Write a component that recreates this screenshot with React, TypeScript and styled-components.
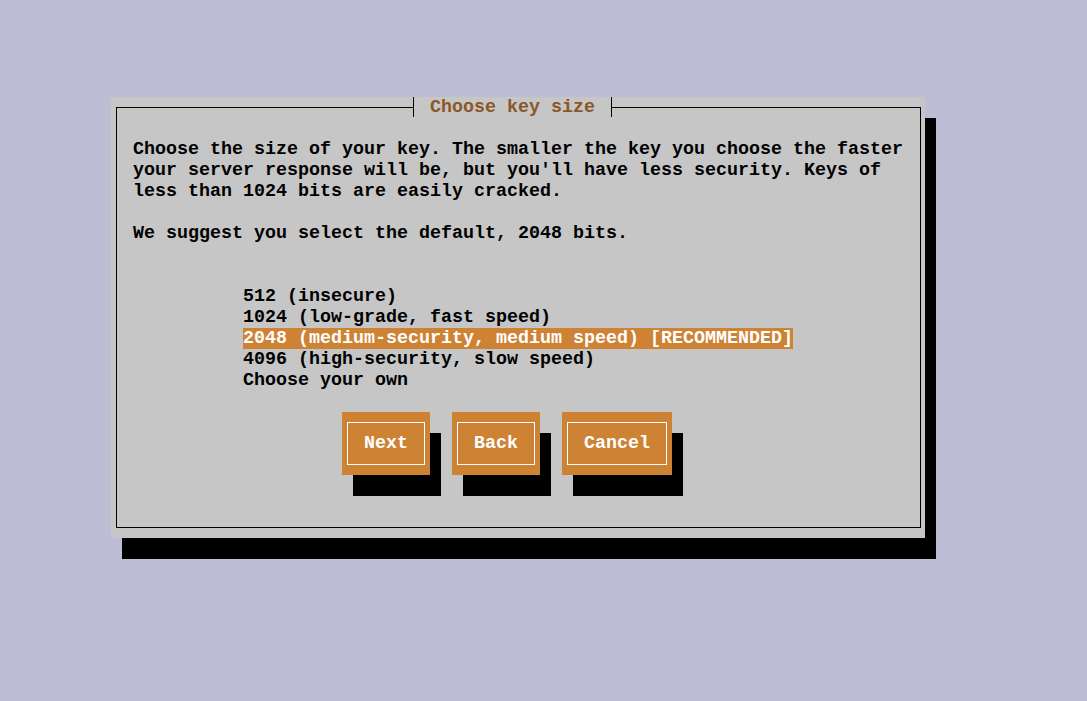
import React from 'react'
import styled, { createGlobalStyle } from 'styled-components'

// one terminal cell = 11px x 21px
const CELL_W = 11
const CELL_H = 21

const ORANGE = '#ce8234'
const GRAY = '#c6c6c6'

const GlobalStyle = createGlobalStyle`
  html, body {
    margin: 0;
    padding: 0;
    background: #bdbed5;
  }
`

const Screen = styled.div`
  width: 1087px;
  height: 701px;
  box-sizing: border-box;
  padding: 97px 0 0 111px;
  background: #bdbed5;
  font-family: 'Liberation Mono', 'Courier New', monospace;
  font-weight: bold;
  font-size: 18.33px;
  line-height: ${CELL_H}px;
  color: #000;
`

const Dialog = styled.div`
  position: relative;
  box-sizing: border-box;
  width: 814px;
  height: 441px;
  padding: 10px 4px 10px 5px;
  background: ${GRAY};
  box-shadow: ${CELL_W}px ${CELL_H}px 0 #000;
`

const Frame = styled.div`
  box-sizing: border-box;
  height: 100%;
  border: 1px solid #000;
  padding: 31px 0 0 16px;
`

const Title = styled.div`
  position: absolute;
  top: 0;
  left: 302px;
  height: 20px;
  padding: 0 16px;
  background: ${GRAY};
  border-left: 1px solid #000;
  border-right: 1px solid #000;
  color: #8a5826;
  line-height: 21px;
  white-space: pre;
`

const Message = styled.div`
  white-space: pre;
  height: ${CELL_H * 5}px;
`

const List = styled.ul`
  list-style: none;
  margin: ${CELL_H * 2}px 0 0 ${CELL_W * 10}px;
  padding: 0;
`

const Item = styled.li<{ $selected?: boolean }>`
  height: ${CELL_H}px;
  white-space: pre;

  span {
    background: ${({ $selected }) => ($selected ? ORANGE : 'transparent')};
    color: ${({ $selected }) => ($selected ? '#fff' : '#000')};
  }
`

const ButtonRow = styled.div`
  display: flex;
  gap: ${CELL_W * 2}px;
  margin: ${CELL_H}px 0 0 ${CELL_W * 19}px;
`

const Button = styled.div<{ $cells: number }>`
  box-sizing: border-box;
  width: ${({ $cells }) => $cells * CELL_W}px;
  height: ${CELL_H * 3}px;
  padding: 10px 5px;
  background: ${ORANGE};
  box-shadow: ${CELL_W}px ${CELL_H}px 0 #000;
`

const ButtonFace = styled.div`
  box-sizing: border-box;
  height: 100%;
  border: 1px solid #fff;
  display: flex;
  align-items: center;
  justify-content: center;
  color: #fff;
`

const message = `Choose the size of your key. The smaller the key you choose the faster
your server response will be, but you'll have less security. Keys of
less than 1024 bits are easily cracked.

We suggest you select the default, 2048 bits.`

const options = [
  '512 (insecure)',
  '1024 (low-grade, fast speed)',
  '2048 (medium-security, medium speed) [RECOMMENDED]',
  '4096 (high-security, slow speed)',
  'Choose your own',
]

const buttons = ['Next', 'Back', 'Cancel']

export default function App() {
  return (
    <>
      <GlobalStyle />
      <Screen>
        <Dialog>
          <Title>Choose key size</Title>
          <Frame>
            <Message>{message}</Message>
            <List>
              {options.map((opt, i) => (
                <Item key={opt} $selected={i === 2}>
                  <span>{opt}</span>
                </Item>
              ))}
            </List>
            <ButtonRow>
              {buttons.map((b) => (
                <Button key={b} $cells={b.length + 4}>
                  <ButtonFace>{b}</ButtonFace>
                </Button>
              ))}
            </ButtonRow>
          </Frame>
        </Dialog>
      </Screen>
    </>
  )
}
